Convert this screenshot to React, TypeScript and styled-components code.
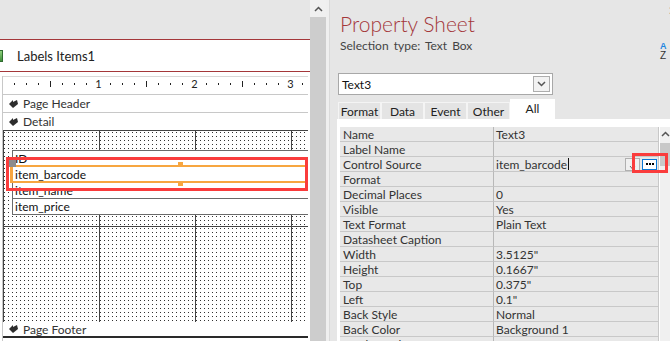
import React from 'react'
import styled, { createGlobalStyle } from 'styled-components'

const GlobalStyle = createGlobalStyle`
  html, body {
    margin: 0;
    padding: 0;
    background: #e6e6e6;
  }
  body {
    font-family: Lato, 'Liberation Sans', sans-serif;
  }
`

const accent = '#a4373a'

const Screen = styled.div`
  position: relative;
  width: 670px;
  height: 341px;
  overflow: hidden;
  display: flex;
  background: #e6e6e6;
  font-family: Lato, 'Liberation Sans', sans-serif;
  color: #333;
`

/* ---------- report design pane ---------- */

const DesignPane = styled.div`
  width: 310px;
  display: flex;
  flex-direction: column;
  flex-shrink: 0;
  overflow: hidden;
`

const DocBand = styled.div`
  height: 39px;
  background: #e6e6e6;
`

const DocTab = styled.div`
  height: 31px;
  border-top: 1px solid ${accent};
  border-bottom: 1px solid ${accent};
  background: #fff;
  display: flex;
  align-items: center;
`

const DocIcon = styled.div`
  width: 12px;
  height: 12px;
  margin-left: -9px;
  box-sizing: border-box;
  border: 1px solid #2f6b2f;
  background: linear-gradient(#8fd07c, #3f8f3a);
`

const DocTitle = styled.span`
  margin-left: 14px;
  font-size: 13px;
  color: #222;
`

const Surface = styled.div`
  flex: 1;
  background: #fff;
  padding: 4px 2px 0 2px;
  display: flex;
  flex-direction: column;
  min-width: 0;
`

const Column = styled.div`
  flex: 1;
  min-width: 0;
  border-left: 1px solid #c8c8c8;
  display: flex;
  flex-direction: column;
`

const Ruler = styled.div`
  height: 17px;
  border-top: 1px solid #d8d8d8;
  overflow: hidden;
  svg {
    display: block;
  }
`

const SectionBar = styled.div<{ $bottom?: boolean }>`
  box-sizing: border-box;
  height: 18px;
  border-top: 1px solid #c8c8c8;
  display: flex;
  align-items: center;
  gap: 5px;
  padding-left: 6px;
  font-size: 12px;
  color: #333;
  ${(p) => (p.$bottom ? 'height: 16px; border-top: none; border-bottom: 2px solid #2a2a2a;' : '')}
`

const DetailGrid = styled.div`
  position: relative;
  height: 192px;
  overflow: hidden;
  background-color: #fff;
  background-image:
    linear-gradient(to bottom, #444 1px, transparent 1px),
    linear-gradient(to right, #444 1px, transparent 1px),
    conic-gradient(at 1px 1px, transparent 270deg, #333 270deg);
  background-size: 100% 96px, 96px 100%, 4px 4px;
  background-position: 0 0, 0 0, 1px 2px;
  padding: 20px 0 0 9px;
  box-sizing: border-box;
`

const FieldBox = styled.div<{ $selected?: boolean }>`
  position: relative;
  box-sizing: border-box;
  width: 337px;
  height: 17px;
  margin-top: -1px;
  border: 1px solid #6a6a6a;
  background: #fff;
  font-size: 12px;
  line-height: 15px;
  padding-left: 2px;
  color: #111;
  white-space: nowrap;
  &:first-child {
    margin-top: 0;
  }
  ${(p) => (p.$selected ? 'z-index: 1;' : '')}
`

const SelectionFrame = styled.div`
  position: absolute;
  left: -2px;
  top: -2px;
  right: -2px;
  bottom: -1px;
  border: 2px solid #f7a640;
  pointer-events: none;
`

const Handle = styled.div<{ $kind: 'move' | 'top' | 'bottom' }>`
  position: absolute;
  background: ${(p) => (p.$kind === 'move' ? '#8c8c8c' : '#f7a640')};
  ${(p) =>
    p.$kind === 'move'
      ? 'left: -5px; top: -7px; width: 8px; height: 7px;'
      : p.$kind === 'top'
        ? 'left: 165px; top: -5px; width: 5px; height: 5px;'
        : 'left: 165px; bottom: -4px; width: 5px; height: 4px;'}
`

const LeftGrip = styled.div`
  position: absolute;
  left: -3px;
  top: 0;
  width: 3px;
  height: 16px;
  background: #f7a640;
`

const Highlight = styled.div`
  position: absolute;
  box-sizing: border-box;
  border: 3px solid #fa3c3c;
  pointer-events: none;
  z-index: 5;
`

const DesignHighlight = styled(Highlight)`
  left: 3px;
  top: 27px;
  width: 302px;
  height: 34px;
`

const FooterRest = styled.div`
  height: 1px;
`

const SideScroll = styled.div`
  width: 16px;
  flex-shrink: 0;
  display: flex;
  flex-direction: column;
  background: #cdcdcd;
`

const ScrollArrow = styled.div<{ $h: number }>`
  height: ${(p) => p.$h}px;
  background: #f0f0f0;
  display: flex;
  align-items: center;
  justify-content: center;
`

const Splitter = styled.div`
  width: 4px;
  flex-shrink: 0;
  background: #efefef;
  border-right: 1px solid #dadada;
  box-sizing: border-box;
`

/* ---------- property sheet ---------- */

const SheetPane = styled.div`
  flex: 1;
  display: flex;
  flex-direction: column;
  padding-left: 10px;
  background: #e6e6e6;
`

const SheetHeader = styled.div`
  display: flex;
  height: 53px;
`

const TitleBlock = styled.div`
  flex: 1;
  padding-top: 12px;
`

const SheetTitle = styled.div`
  font-size: 21px;
  line-height: 24px;
  font-weight: 300;
  color: ${accent};
`

const SelectionType = styled.div`
  margin-top: 2px;
  font-size: 12px;
  line-height: 15px;
  color: #444;
  word-spacing: 2px;
`

const CornerTools = styled.div`
  width: 13px;
  display: flex;
  flex-direction: column;
  align-items: flex-start;
`

const CloseMark = styled.span`
  margin: 5px 0 0 10px;
  font-size: 12px;
  line-height: 12px;
  color: #777;
`

const SortIcon = styled.div`
  margin-top: 25px;
  margin-left: 2px;
  display: flex;
  flex-direction: column;
  font-family: 'Liberation Sans', sans-serif;
  span:first-child {
    font-size: 9px;
    line-height: 8px;
    font-weight: bold;
    color: #1f86e0;
  }
  span:last-child {
    margin-top: 1px;
    font-size: 10px;
    line-height: 9px;
    color: #333;
  }
`

const Combo = styled.div`
  margin: 20px 0 0 -2px;
  width: 215px;
  height: 22px;
  box-sizing: border-box;
  border: 1px solid #a8a8a8;
  background: #fff;
  display: flex;
  align-items: center;
  padding: 0 2px 0 3px;
  font-size: 12px;
  color: #111;
`

const ComboText = styled.span`
  flex: 1;
`

const ComboButton = styled.div`
  width: 17px;
  height: 16px;
  box-sizing: border-box;
  border: 1px solid #adadad;
  background: #f2f2f2;
  display: flex;
  align-items: center;
  justify-content: center;
`

const TabRow = styled.div`
  margin: 4px 0 0 -2px;
  height: 20px;
  display: flex;
  align-items: flex-end;
`

const Tab = styled.div<{ $active?: boolean }>`
  box-sizing: border-box;
  width: ${(p) => (p.$active ? 45 : 43)}px;
  height: ${(p) => (p.$active ? 21 : 17)}px;
  margin-bottom: ${(p) => (p.$active ? -1 : 0)}px;
  border: 1px solid ${(p) => (p.$active ? '#fff' : '#f4f4f4')};
  border-bottom: none;
  background: ${(p) => (p.$active ? '#fff' : '#e4e4e4')};
  display: flex;
  align-items: center;
  justify-content: center;
  padding-bottom: ${(p) => (p.$active ? 3 : 0)}px;
  font-size: 12px;
  color: #222;
`

const TabBody = styled.div`
  flex: 1;
  margin-left: -3px;
  background: #fff;
  padding: 8px 0 0 3px;
  display: flex;
  gap: 1px;
  overflow: hidden;
`

const PropGrid = styled.div`
  width: 319px;
  flex-shrink: 0;
`

const PropRow = styled.div`
  display: grid;
  grid-template-columns: 154px 165px;
`

const PropCell = styled.div<{ $value?: boolean }>`
  box-sizing: border-box;
  height: 15px;
  background: #e8e8e8;
  border-bottom: 1px solid #c8c8c8;
  border-right: 1px solid ${(p) => (p.$value ? '#c8c8c8' : '#b8b8b8')};
  padding-left: ${(p) => (p.$value ? 2 : 3)}px;
  display: flex;
  align-items: center;
  font-size: 12px;
  color: #333;
  white-space: nowrap;
  overflow: hidden;
`

const Caret = styled.span`
  width: 1px;
  height: 12px;
  margin-left: 1px;
  background: #111;
`

const CellSpacer = styled.span`
  flex: 1;
`

const DropBtn = styled.div`
  width: 15px;
  height: 13px;
  box-sizing: border-box;
  border: 1px solid #b0b0b0;
  background: #f0f0f0;
  display: flex;
  align-items: flex-end;
  justify-content: center;
`

const BuildBtn = styled.div`
  width: 15px;
  height: 11px;
  margin: 0 1px 0 2px;
  box-sizing: border-box;
  border: 1px solid #0a78d7;
  background: #fff;
  display: flex;
  align-items: center;
  justify-content: center;
  gap: 1px;
  i {
    width: 2px;
    height: 2px;
    background: #000;
  }
`

const GridScroll = styled.div`
  width: 11px;
  display: flex;
  flex-direction: column;
  background: #f0f0f0;
`

const GridThumb = styled.div`
  margin-top: 2px;
  height: 23px;
  background: #c8c8c8;
`

const SheetHighlight = styled(Highlight)`
  left: 632px;
  top: 153px;
  width: 36px;
  height: 20px;
`

/* ---------- drawings ---------- */

const Chevron = ({ up = false }: { up?: boolean }) => (
  <svg width="9" height="6" viewBox="0 0 9 6">
    <path
      d={up ? 'M1 5 L4.5 1.5 L8 5' : 'M1 1 L4.5 4.5 L8 1'}
      fill="none"
      stroke="#555"
      strokeWidth="1.5"
    />
  </svg>
)

const SectionGlyph = () => (
  <svg width="9" height="8" viewBox="0 0 9 8">
    <polygon points="0,4 4,0 4,2 8,0 9,4 4,8" fill="#2d2d2d" />
  </svg>
)

const RulerMarks = () => {
  const ticks = []
  for (let k = 1; k * 12 < 307; k++) {
    const x = k * 12 - 1
    if (k % 8 === 0) {
      ticks.push(
        <text key={k} x={x + 0.5} y={11} fontSize="11" textAnchor="middle" fill="#222" fontFamily="Lato, sans-serif">
          {k / 8}
        </text>
      )
    } else if (k % 4 === 0) {
      ticks.push(<rect key={k} x={x} y={4} width={1} height={6} fill="#222" />)
    } else {
      ticks.push(<rect key={k} x={x} y={6} width={1} height={2} fill="#222" />)
    }
  }
  return (
    <svg width="307" height="17" viewBox="0 0 307 17">
      {ticks}
    </svg>
  )
}

const properties: [string, string][] = [
  ['Name', 'Text3'],
  ['Label Name', ''],
  ['Control Source', 'item_barcode'],
  ['Format', ''],
  ['Decimal Places', '0'],
  ['Visible', 'Yes'],
  ['Text Format', 'Plain Text'],
  ['Datasheet Caption', ''],
  ['Width', '3.5125"'],
  ['Height', '0.1667"'],
  ['Top', '0.375"'],
  ['Left', '0.1"'],
  ['Back Style', 'Normal'],
  ['Back Color', 'Background 1'],
  ['Border Style', 'Transparent'],
]

const tabs = ['Format', 'Data', 'Event', 'Other', 'All']

export default function App() {
  return (
    <Screen>
      <GlobalStyle />
      <DesignPane>
        <DocBand />
        <DocTab>
          <DocIcon />
          <DocTitle>Labels Items1</DocTitle>
        </DocTab>
        <Surface>
          <Column>
            <Ruler>
              <RulerMarks />
            </Ruler>
            <SectionBar>
              <SectionGlyph />
              Page Header
            </SectionBar>
            <SectionBar>
              <SectionGlyph />
              Detail
            </SectionBar>
            <DetailGrid>
              <FieldBox>ID</FieldBox>
              <FieldBox $selected>
                item_barcode
                <SelectionFrame />
                <LeftGrip />
                <Handle $kind="move" />
                <Handle $kind="top" />
                <Handle $kind="bottom" />
              </FieldBox>
              <FieldBox>item_name</FieldBox>
              <FieldBox>item_price</FieldBox>
              <DesignHighlight />
            </DetailGrid>
            <SectionBar $bottom>
              <SectionGlyph />
              Page Footer
            </SectionBar>
            <FooterRest />
          </Column>
        </Surface>
      </DesignPane>

      <SideScroll>
        <ScrollArrow $h={17}>
          <Chevron up />
        </ScrollArrow>
      </SideScroll>
      <Splitter />

      <SheetPane>
        <SheetHeader>
          <TitleBlock>
            <SheetTitle>Property Sheet</SheetTitle>
            <SelectionType>Selection type: Text Box</SelectionType>
          </TitleBlock>
          <CornerTools>
            <CloseMark>✕</CloseMark>
            <SortIcon>
              <span>A</span>
              <span>Z</span>
            </SortIcon>
          </CornerTools>
        </SheetHeader>

        <Combo>
          <ComboText>Text3</ComboText>
          <ComboButton>
            <Chevron />
          </ComboButton>
        </Combo>

        <TabRow>
          {tabs.map((t) => (
            <Tab key={t} $active={t === 'All'}>
              {t}
            </Tab>
          ))}
        </TabRow>

        <TabBody>
          <PropGrid>
            {properties.map(([name, value]) => (
              <PropRow key={name}>
                <PropCell>{name}</PropCell>
                <PropCell $value>
                  {value}
                  {name === 'Control Source' && (
                    <>
                      <Caret />
                      <CellSpacer />
                      <DropBtn>
                        <svg width="7" height="6" viewBox="0 0 7 6">
                          <path d="M1 2 L3.5 5 L6 2" fill="none" stroke="#666" strokeWidth="1" />
                        </svg>
                      </DropBtn>
                      <BuildBtn>
                        <i />
                        <i />
                        <i />
                      </BuildBtn>
                    </>
                  )}
                </PropCell>
              </PropRow>
            ))}
          </PropGrid>
          <GridScroll>
            <ScrollArrow $h={14}>
              <Chevron up />
            </ScrollArrow>
            <GridThumb />
          </GridScroll>
        </TabBody>
      </SheetPane>

      <SheetHighlight />
    </Screen>
  )
}
